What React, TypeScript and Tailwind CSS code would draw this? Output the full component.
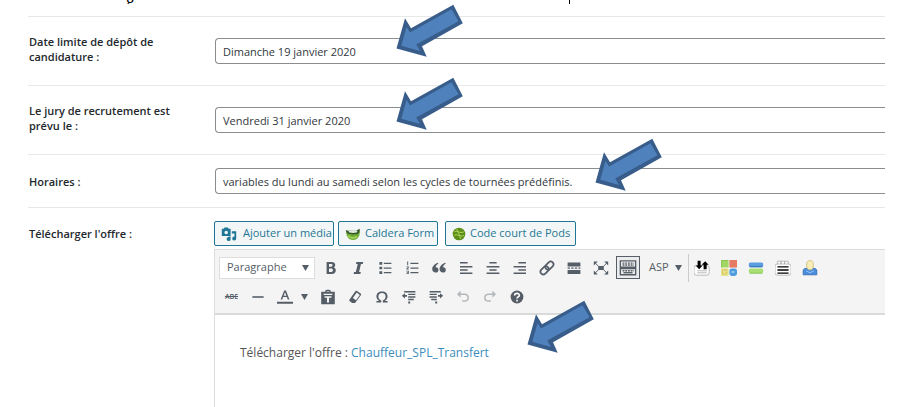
import type { ReactNode } from "react";

interface FieldProps {
  id: string;
  label: string;
  value: string;
  arrow: string;
  tall?: boolean;
}

const FIELDS: FieldProps[] = [
  { id: "date-limite", label: "Date limite de dépôt de candidature :", value: "Dimanche 19 janvier 2020", arrow: "left-[396px] -top-3", tall: true },
  { id: "jury", label: "Le jury de recrutement est prévu le :", value: "Vendredi 31 janvier 2020", arrow: "left-[396px] -top-2", tall: true },
  { id: "horaires", label: "Horaires :", value: "variables du lundi au samedi selon les cycles de tournées prédéfinis.", arrow: "left-[595px] -top-4" },
];

export default function App() {
  return (
    <main className="flex min-h-screen flex-col overflow-hidden bg-white font-['Open_Sans',sans-serif] text-xs text-[#32373c]">
      <div className="mb-3 flex h-1 items-end gap-[434px] overflow-hidden pl-[126px] text-black">
        <span className="text-base leading-[7px]">g</span>
        <span className="h-1 w-px bg-black" />
      </div>
      {FIELDS.map((field) => (
        <Field key={field.id} {...field} />
      ))}
      <div className="ml-7 mr-[35px] flex flex-1 border-t border-[#e8e8e8] pt-[13px]">
        <Label htmlFor="offre" className="pt-[5px]">Télécharger l'offre :</Label>
        <div className="flex min-w-0 flex-1 flex-col">
          <div className="mb-[3px] flex">
            <MediaButton icon={<MediaIcon />} className="mr-1 w-[120px] gap-1.5">Ajouter un média</MediaButton>
            <MediaButton icon={<CalderaIcon />} className="mr-[7px] w-[100px] gap-1">Caldera Form</MediaButton>
            <MediaButton icon={<PodsIcon />} className="w-[131px] gap-1">Code court de Pods</MediaButton>
          </div>
          <Editor />
        </div>
      </div>
    </main>
  );
}

function Label({ htmlFor, className, children }: { htmlFor: string; className: string; children: ReactNode }) {
  return (
    <label htmlFor={htmlFor} className={`w-[186px] shrink-0 pl-px pr-6 text-[11px] font-semibold leading-[15px] text-[#23282d] ${className}`}>
      {children}
    </label>
  );
}

function Field({ id, label, value, arrow, tall }: FieldProps) {
  return (
    <div className={`relative ${tall ? "h-[69px]" : "h-[53px]"}`}>
      <div className={`ml-7 mr-[35px] flex border-t border-[#e8e8e8] ${tall ? "items-start pt-[21px]" : "items-center pt-[13px]"}`}>
        <Label htmlFor={id} className={tall ? "-mt-1" : ""}>{label}</Label>
        <input
          id={id}
          type="text"
          defaultValue={value}
          className="ml-px h-[26px] min-w-0 flex-1 rounded-l border border-r-0 border-[#8a8d90] bg-white px-[7px] text-[11px] text-[#32373c] outline-none"
        />
      </div>
      <Arrow className={arrow} />
    </div>
  );
}

function Arrow({ className }: { className: string }) {
  return (
    <svg className={`pointer-events-none absolute z-10 ${className}`} width="68" height="54" viewBox="0 0 68 54" aria-hidden="true">
      <path fill="#385d8a" d="M.5 44.500 9 14.300l6 10L57.300.7l9.500 18.600L26 42.300l4.700 10.500z" />
      <path fill="#4f81bd" d="M5.300 41.700 10.500 23l3.500 5.500L55.500 5.300l7 12L20.200 40.500l3.800 6.500z" />
    </svg>
  );
}

function MediaButton({ icon, className, children }: { icon: ReactNode; className: string; children: ReactNode }) {
  return (
    <button type="button" className={`flex h-[25px] items-center whitespace-nowrap rounded-[2px] border border-[#1f7695] bg-[#f3f6f7] pl-1.5 text-[11px] text-[#1f7695] ${className}`}>
      {icon}
      {children}
    </button>
  );
}

function Editor() {
  return (
    <div className="relative flex flex-1 flex-col border-l border-t border-[#dcdcdc]">
      <div role="toolbar" className="h-[65px] border-b-2 border-[#dadada] bg-[#f4f4f4] pl-1 pt-1.5 text-[#555d66]">
        <div className="flex h-[23px] items-center">
          <div className="relative mr-0.5">
            <select aria-label="Format" className="block h-[22px] w-24 appearance-none border border-[#dddddd] bg-white pl-[7px] text-[11px] text-[#555d66]">
              <option>Paragraphe</option>
            </select>
            <Caret className="pointer-events-none absolute right-1.5 top-2" />
          </div>
          <Tool label="Gras"><path d="M4.500 2.500h6c3 0 4.800 1.400 4.800 3.800 0 1.500-.8 2.600-2 3.100 1.800.4 2.700 1.700 2.700 3.500 0 2.800-1.900 4.600-5 4.600H4.500zm3 2.500v3.300h2.300c1.400 0 2.100-.6 2.100-1.700S11.200 5 9.800 5zm0 5.700v4.200h2.600c1.500 0 2.300-.8 2.300-2.100s-.8-2.100-2.300-2.100z" fillRule="evenodd" /></Tool>
          <Tool label="Italique"><path d="M8 2.500h8.500L16 5h-2.300l-2.400 10h2.200l-.5 2.500H4.500L5 15h2.300L9.700 5H7.500z" /></Tool>
          <Tool label="Liste à puces"><path d="M3 2.500h3.500V6H3zm5.500 1H18V5H8.500zM3 8.300h3.500v3.400H3zm5.500 1H18v1.500H8.500zM3 14h3.500v3.500H3zm5.500 1H18v1.500H8.500z" /></Tool>
          <Tool label="Liste numérotée"><path d="M8 3.500h10V5H8zm0 5.800h10v1.500H8zM8 15h10v1.500H8zM4 2h1.200v4.500H4zM3 8h3v1.800L4.500 11H6v1H3v-1l1.700-1.500V9H3zm0 5.500h3v4H3v-1h2v-.7H3.500v-.8H5v-.6H3z" /></Tool>
          <Tool label="Citation"><path d="M9.300 4.500C6.800 6 5.700 8 5.800 9.200c2-.3 3.500 1 3.500 3.200 0 2-1.400 3.300-3.400 3.300-2.600 0-4.400-1.700-4.400-4.400C1.500 8 4.800 5 8.500 3.500zm9.200 0C16 6 14.900 8 15 9.200c2-.3 3.500 1 3.500 3.200 0 2-1.400 3.300-3.400 3.300-2.600 0-4.400-1.700-4.400-4.400 0-3.300 3.300-6.300 7-7.800z" /></Tool>
          <Tool label="Aligner à gauche"><path d="M2.500 2.500H12v2H2.500zm0 5H18v2H2.500zm0 4H12v2H2.500zm0 4H18v2H2.500z" /></Tool>
          <Tool label="Centrer"><path d="M5.500 2.500h9v2h-9zm-3.500 5h16v2H2zm3.500 4h9v2h-9zm-3.500 4h16v2H2z" /></Tool>
          <Tool label="Aligner à droite"><path d="M8 2.500h9.500v2H8zm-6 5h15.500v2H2zm6 4h9.500v2H8zm-6 4h15.500v2H2z" /></Tool>
          <Tool label="Insérer un lien">
            <g transform="rotate(-45 10 10)" fill="none" stroke="currentColor" strokeWidth="2.200">
              <rect x="0" y="6.500" width="11.500" height="7" rx="3.500" />
              <rect x="8.500" y="6.500" width="11.500" height="7" rx="3.500" />
            </g>
          </Tool>
          <Tool label="Lire la suite"><path d="M2 3h16v5H2zm0 6.500h3V11H2zm4.500 0h3V11h-3zm4.500 0h3V11h-3zm4.500 0H18V11h-2.500zM2 12.500h16v5H2z" /></Tool>
          <Tool label="Plein écran">
            <path d="M6.500 7.500h7v5h-7zM1 2h5L1 7zm18 0h-5l5 5zM1 18h5l-5-5zm18 0h-5l5-5z" />
            <path fill="none" stroke="currentColor" strokeWidth="1.200" d="m3 4 4 4m10-4-4 4M3 16l4-4m10 4-4-4" />
          </Tool>
          <Tool label="Ouvrir la barre d'outils" active>
            <path fill="none" stroke="currentColor" strokeWidth="1.500" d="M1.500 2h17v7h-17zm0 8.500h17v7h-17z" />
            <path fill="none" stroke="currentColor" strokeWidth="1.500" strokeDasharray="2 1" d="M4 4.500h12.500M4 6.700h12.500M4 13h12.500" />
            <path d="M5 14.500h10V16H5z" />
          </Tool>
          <button type="button" className="ml-2 flex items-center gap-1.5 text-[11px]">
            ASP
            <Caret />
          </button>
          <div className="ml-1.5 h-7 shrink-0 border-l border-[#cccccc]" />
          <Tool label="Accordéon">
            <rect x="0" y="7" width="19" height="12" rx="3" fill="#fff" stroke="#aaa" />
            <path fill="none" stroke="#aaa" d="M4 13.500h12M4 16h12" />
            <path fill="#000" d="M4.500 1h3.800v6h2.500l-4.300 4.500L2 7h2.500zm7.500 10.500h3.800V6h2.500L14 1.500 9.500 6H12z" />
          </Tool>
          <Tool label="Grille">
            <rect x="0" y="0" width="9.500" height="9.500" rx="1" fill="#a3d563" />
            <rect x="10.500" y="0" width="9.500" height="9.500" fill="#e37c62" />
            <rect x="0" y="10.500" width="9.500" height="9.500" rx="1" fill="#dce791" />
            <rect x="10.500" y="10.500" width="9.500" height="9.500" rx="3" fill="#4d9ddd" />
            <path fill="none" stroke="#75b743" strokeDasharray="2 1" d="M.5 9V.5H9" />
            <path fill="none" stroke="#f2b64b" strokeWidth="1.500" strokeDasharray="2 1" d="M2 11v6.500h5V12H4" />
            <path stroke="#b9dcf5" strokeWidth="1.500" d="M13 15h4" />
          </Tool>
          <Tool label="Boutons">
            <rect x="1" y="3" width="18" height="6" rx="2" fill="#5b9ee0" />
            <path stroke="#3977bd" strokeWidth="1.500" d="M2 8.300h16" />
            <rect x="1" y="10.500" width="18" height="6.500" rx="2" fill="#a9df72" />
            <path stroke="#83bd50" d="M2.500 16.500h15" />
          </Tool>
          <Tool label="Onglets">
            <path fill="#fff" stroke="#aaa" d="M3 5V1.500h4.500V5m0 0V1.500H12V5m0 0V1.500h4.500V5" />
            <rect x="0" y="5" width="20" height="14" rx="3" fill="#fff" stroke="#aaa" />
            <path stroke="#000" strokeWidth="1.600" d="M3 8.700h14M3 12.500h14M3 16.300h14" />
          </Tool>
          <Tool label="Membre">
            <path fill="#4a8ddc" stroke="#2d66b1" d="M1.500 18.500v-5c0-2 1.500-3 3.500-3h10c2 0 3.500 1 3.500 3v5z" />
            <ellipse cx="10" cy="6.500" rx="4.300" ry="5.800" fill="#f8edb7" stroke="#ccb878" />
            <path fill="none" stroke="#a7cdf6" d="m5 13.500 5 2.500 5-2.500" />
          </Tool>
        </div>
        <div className="mt-1.5 flex h-[23px] items-center">
          <button type="button" aria-label="Barré" className="w-[25px] text-[7px] font-semibold line-through">ABE</button>
          <Tool label="Ligne horizontale"><path d="M3 9h14v2H3z" /></Tool>
          <Tool label="Couleur du texte"><path fillRule="evenodd" d="M9 2h2.200l4.300 11h-2l-1.200-3H7.700l-1.200 3h-2zm1 2.200L8.300 8.500h3.400zM0 16h20v2.500H0z" /></Tool>
          <button type="button" aria-label="Couleurs" className="flex w-3 justify-center"><Caret /></button>
          <span className="w-1" />
          <Tool label="Coller en texte"><path fillRule="evenodd" d="M1.500 3.500h5V3c0-1 .8-2 2-2h3c1.200 0 2 1 2 2v.5h5V19h-17zm6.500 0h4V2.800H8zM4.500 6v1.500h11V6zm1.200 3v2h3v6h2.600v-6h3V9z" /></Tool>
          <Tool label="Supprimer la mise en forme"><path fillRule="evenodd" d="M12.500 2.500 17 5.500c.8.500.8 1.500.3 2.200L10 17.500H6.500l-3-2.300c-.8-.6-.8-1.500-.3-2.200l7-9.800c.6-.8 1.500-1.200 2.300-.7zm-.3 2L7.300 11.300l4 2.900 4.700-6.800z" /></Tool>
          <Tool label="Caractères spéciaux"><path d="M3 15h3.500C4 13.500 3 11.500 3 9.200 3 5.500 5.800 3 10 3s7 2.500 7 6.200c0 2.300-1 4.300-3.500 5.800H17v2h-6v-2.700c2.300-1 3.500-2.600 3.500-5 0-2.700-1.700-4.400-4.500-4.400S5.500 6.600 5.500 9.300c0 2.400 1.200 4 3.500 5V17H3z" /></Tool>
          <Tool label="Diminuer le retrait"><path d="M4 2.500h14v1.800H4zm5 3.300h9v1.800H9zM1 8.500l4-3.300v2.300h2.500V9.800H5V12zM9 9h9v1.800H9zm0 3.200h7V14H9zm0 3.300h2.500V18H9z" /></Tool>
          <Tool label="Augmenter le retrait"><path d="M2 2.500h14v1.800H2zm0 3.300h9v1.800H2zm17 2.700-4-3.300v2.300h-2.500v2.300H15V12zM2 9h9v1.800H2zm2 3.200h7V14H4zm5 3.300h2.500V18H9z" /></Tool>
          <Tool label="Annuler" muted><path d="M7 2v3.500h5c3.500 0 5.500 2 5.500 5.300 0 3.200-2 5.200-5.500 5.200H9v-2h3c2.200 0 3.500-1.200 3.500-3.200S14.200 7.500 12 7.500H7V11L2.500 6.500z" /></Tool>
          <Tool label="Rétablir" muted><path d="M13 2v3.500H8c-3.500 0-5.500 2-5.500 5.300C2.500 14 4.500 16 8 16h3v-2H8c-2.200 0-3.500-1.200-3.500-3.200S5.800 7.500 8 7.500h5V11l4.500-4.500z" /></Tool>
          <Tool label="Aide">
            <circle cx="10" cy="10" r="8" />
            <path fill="none" stroke="#fff" strokeWidth="2" d="M7 8c0-3.500 6-3.300 6-.3 0 2-3 2-3 4.300m0 1.500v2" />
          </Tool>
        </div>
      </div>
      <div id="offre" className="min-h-[92px] flex-1 bg-white pl-[25px] pt-7 text-xs leading-5 text-[#555555]">
        Télécharger l'offre : <a href="#offre" className="text-[#3c8dbc]">Chauffeur_SPL_Transfert</a>
      </div>
      <Arrow className="left-[312px] top-[50px]" />
    </div>
  );
}

function Tool({ label, active, muted, children }: { label: string; active?: boolean; muted?: boolean; children: ReactNode }) {
  return (
    <button type="button" aria-label={label} className={`flex w-[27px] shrink-0 justify-center ${muted ? "text-[#b5b8bb]" : ""}`}>
      <span className={active ? "flex h-[23px] w-6 items-center justify-center border border-[#555d66] bg-[#ececec]" : ""}>
        <svg className={active ? "size-[18px]" : "size-4"} viewBox="0 0 20 20" fill="currentColor" aria-hidden="true">
          {children}
        </svg>
      </span>
    </button>
  );
}

function Caret({ className }: { className?: string }) {
  return (
    <svg className={className} width="7" height="6" viewBox="0 0 7 6" fill="#555d66" aria-hidden="true">
      <path d="M0 0h7L3.500 6z" />
    </svg>
  );
}

function MediaIcon() {
  return (
    <svg className="size-4" viewBox="0 0 20 20" fill="currentColor" aria-hidden="true">
      <path fillRule="evenodd" d="M1 3.500h2.500L4.500 2h4l1 1.500H12v9H1zm5.500 2.300a2.200 2.200 0 1 0 0 4.400 2.200 2.200 0 0 0 0-4.400z" />
      <path d="M13.500 6.500H19v9.200a2.500 2.500 0 1 1-2.200-2.500V9.500h-3.300zM12 13v3.500a2.500 2.500 0 1 1-2.500-2.700V13z" />
    </svg>
  );
}

function CalderaIcon() {
  return (
    <svg className="size-4" viewBox="0 0 20 20" aria-hidden="true">
      <path fill="#6dab35" d="M1.500 7c0 7 3.500 10.500 8.500 10.500S18.500 14 18.500 7z" />
      <path fill="#35582b" d="M1 5c2 1.500 4 1 5.500.5L14 6l4-2.500c1 2 .5 4-1 5.500-2 2-12 2-14 0C1.500 7.800 1 6.500 1 5z" />
      <ellipse cx="10" cy="7" rx="5.500" ry="1.800" fill="#e3eadc" />
      <path fill="none" stroke="#a3d65a" strokeWidth="2" d="M4 12c2 3 7 4 11 1" />
    </svg>
  );
}

function PodsIcon() {
  return (
    <svg className="size-3.5" viewBox="0 0 20 20" aria-hidden="true">
      <circle cx="10" cy="10" r="9" fill="#5d8f16" />
      <path fill="none" stroke="#b8d96b" strokeWidth="1.300" d="M3 7c4-3 8 3 14 0M3 12c4-3 9 3 14 0M7 3c0 3 5 9 5 14" />
    </svg>
  );
}
